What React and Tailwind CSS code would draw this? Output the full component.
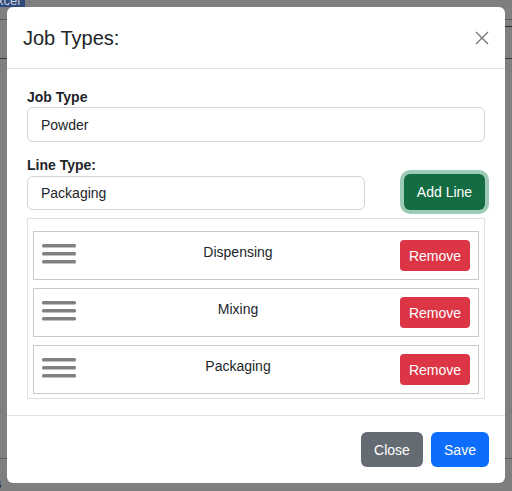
import React from 'react';

const lines = ['Dispensing', 'Mixing', 'Packaging'];

const Grip = () => (
  <svg width="34" height="24" viewBox="0 0 34 24" className="shrink-0">
    <rect x="0" y="4" width="34" height="3.5" rx="1.5" fill="#808080" />
    <rect x="0" y="12" width="34" height="3.5" rx="1.5" fill="#808080" />
    <rect x="0" y="20" width="34" height="3.5" rx="1.5" fill="#808080" />
  </svg>
);

const LineItem = ({ name }) => (
  <div className="flex items-start border border-[#c9c9c9] p-2">
    <Grip />
    <div className="flex-1 pt-[2px] text-center text-sm leading-[21px] text-[#212529]">{name}</div>
    <button className="h-[31px] w-[70px] rounded-[4px] bg-[#dc3545] text-sm text-white">Remove</button>
  </div>
);

export default function App() {
  return (
    <div
      className="relative h-[491px] w-full overflow-hidden bg-[#7f7f7f]"
      style={{ fontFamily: '"Liberation Sans", Arial, sans-serif' }}
    >
      {/* page behind the backdrop */}
      <div className="absolute left-0 top-0 h-[7px] w-[25px] overflow-hidden bg-[#2c4a7c]">
        <span className="absolute -left-[3px] -top-[9px] text-[13px] text-[#c8d0dc]">xcel</span>
      </div>
      <div className="absolute left-0 top-[19px] h-px w-full bg-[#5c5c5c]" />
      <div className="absolute right-0 top-[26px] h-px w-[10px] bg-[#2e2e2e]" />
      <div className="absolute left-0 top-[58px] h-px w-full bg-[#3a3a3a]" />
      <div className="absolute left-0 top-[458px] h-px w-full bg-[#5c5c5c]" />
      <span className="absolute -left-[5px] top-[474px] text-[13px] text-[#222]">s</span>

      {/* modal */}
      <div className="absolute left-[7px] top-[7px] w-[498px] rounded-[6px] bg-white text-[#212529]">
        <div className="flex h-[62px] items-center justify-between border-b border-[#dee2e6] pl-4 pr-4">
          <h5 className="text-[20px] leading-[30px]">Job Types:</h5>
          <svg width="14" height="14" viewBox="0 0 14 14">
            <path d="M1 1 L13 13 M13 1 L1 13" stroke="#777" strokeWidth="1.4" />
          </svg>
        </div>

        <div className="px-5 pb-4 pt-[18px]">
          <label className="block text-sm font-bold leading-[20px]">Job Type</label>
          <div className="flex h-[35px] items-center rounded-[6px] border border-[#ced4da] px-[13px] text-sm">
            Powder
          </div>

          <div className="mt-[13px] flex items-end justify-between">
            <div className="w-[338px]">
              <label className="block text-sm font-bold leading-[21px]">Line Type:</label>
              <div className="flex h-[34px] items-center rounded-[6px] border border-[#ced4da] px-[13px] text-sm">
                Packaging
              </div>
            </div>
            <button className="h-[36px] w-[81px] rounded-[6px] bg-[#146c43] text-sm text-white ring-4 ring-[#9dcbb5]">
              Add Line
            </button>
          </div>

          <div className="mt-2 flex flex-col gap-2 border border-[#dee2e6] px-[5px] pb-[4px] pt-[12px]">
            {lines.map((l) => (
              <LineItem key={l} name={l} />
            ))}
          </div>
        </div>

        <div className="flex justify-end gap-2 border-t border-[#dee2e6] p-4">
          <button className="h-[35px] w-[62px] rounded-[6px] bg-[#646b73] text-sm text-white">Close</button>
          <button className="h-[35px] w-[58px] rounded-[6px] bg-[#0d6efd] text-sm text-white">Save</button>
        </div>
      </div>
    </div>
  );
}
